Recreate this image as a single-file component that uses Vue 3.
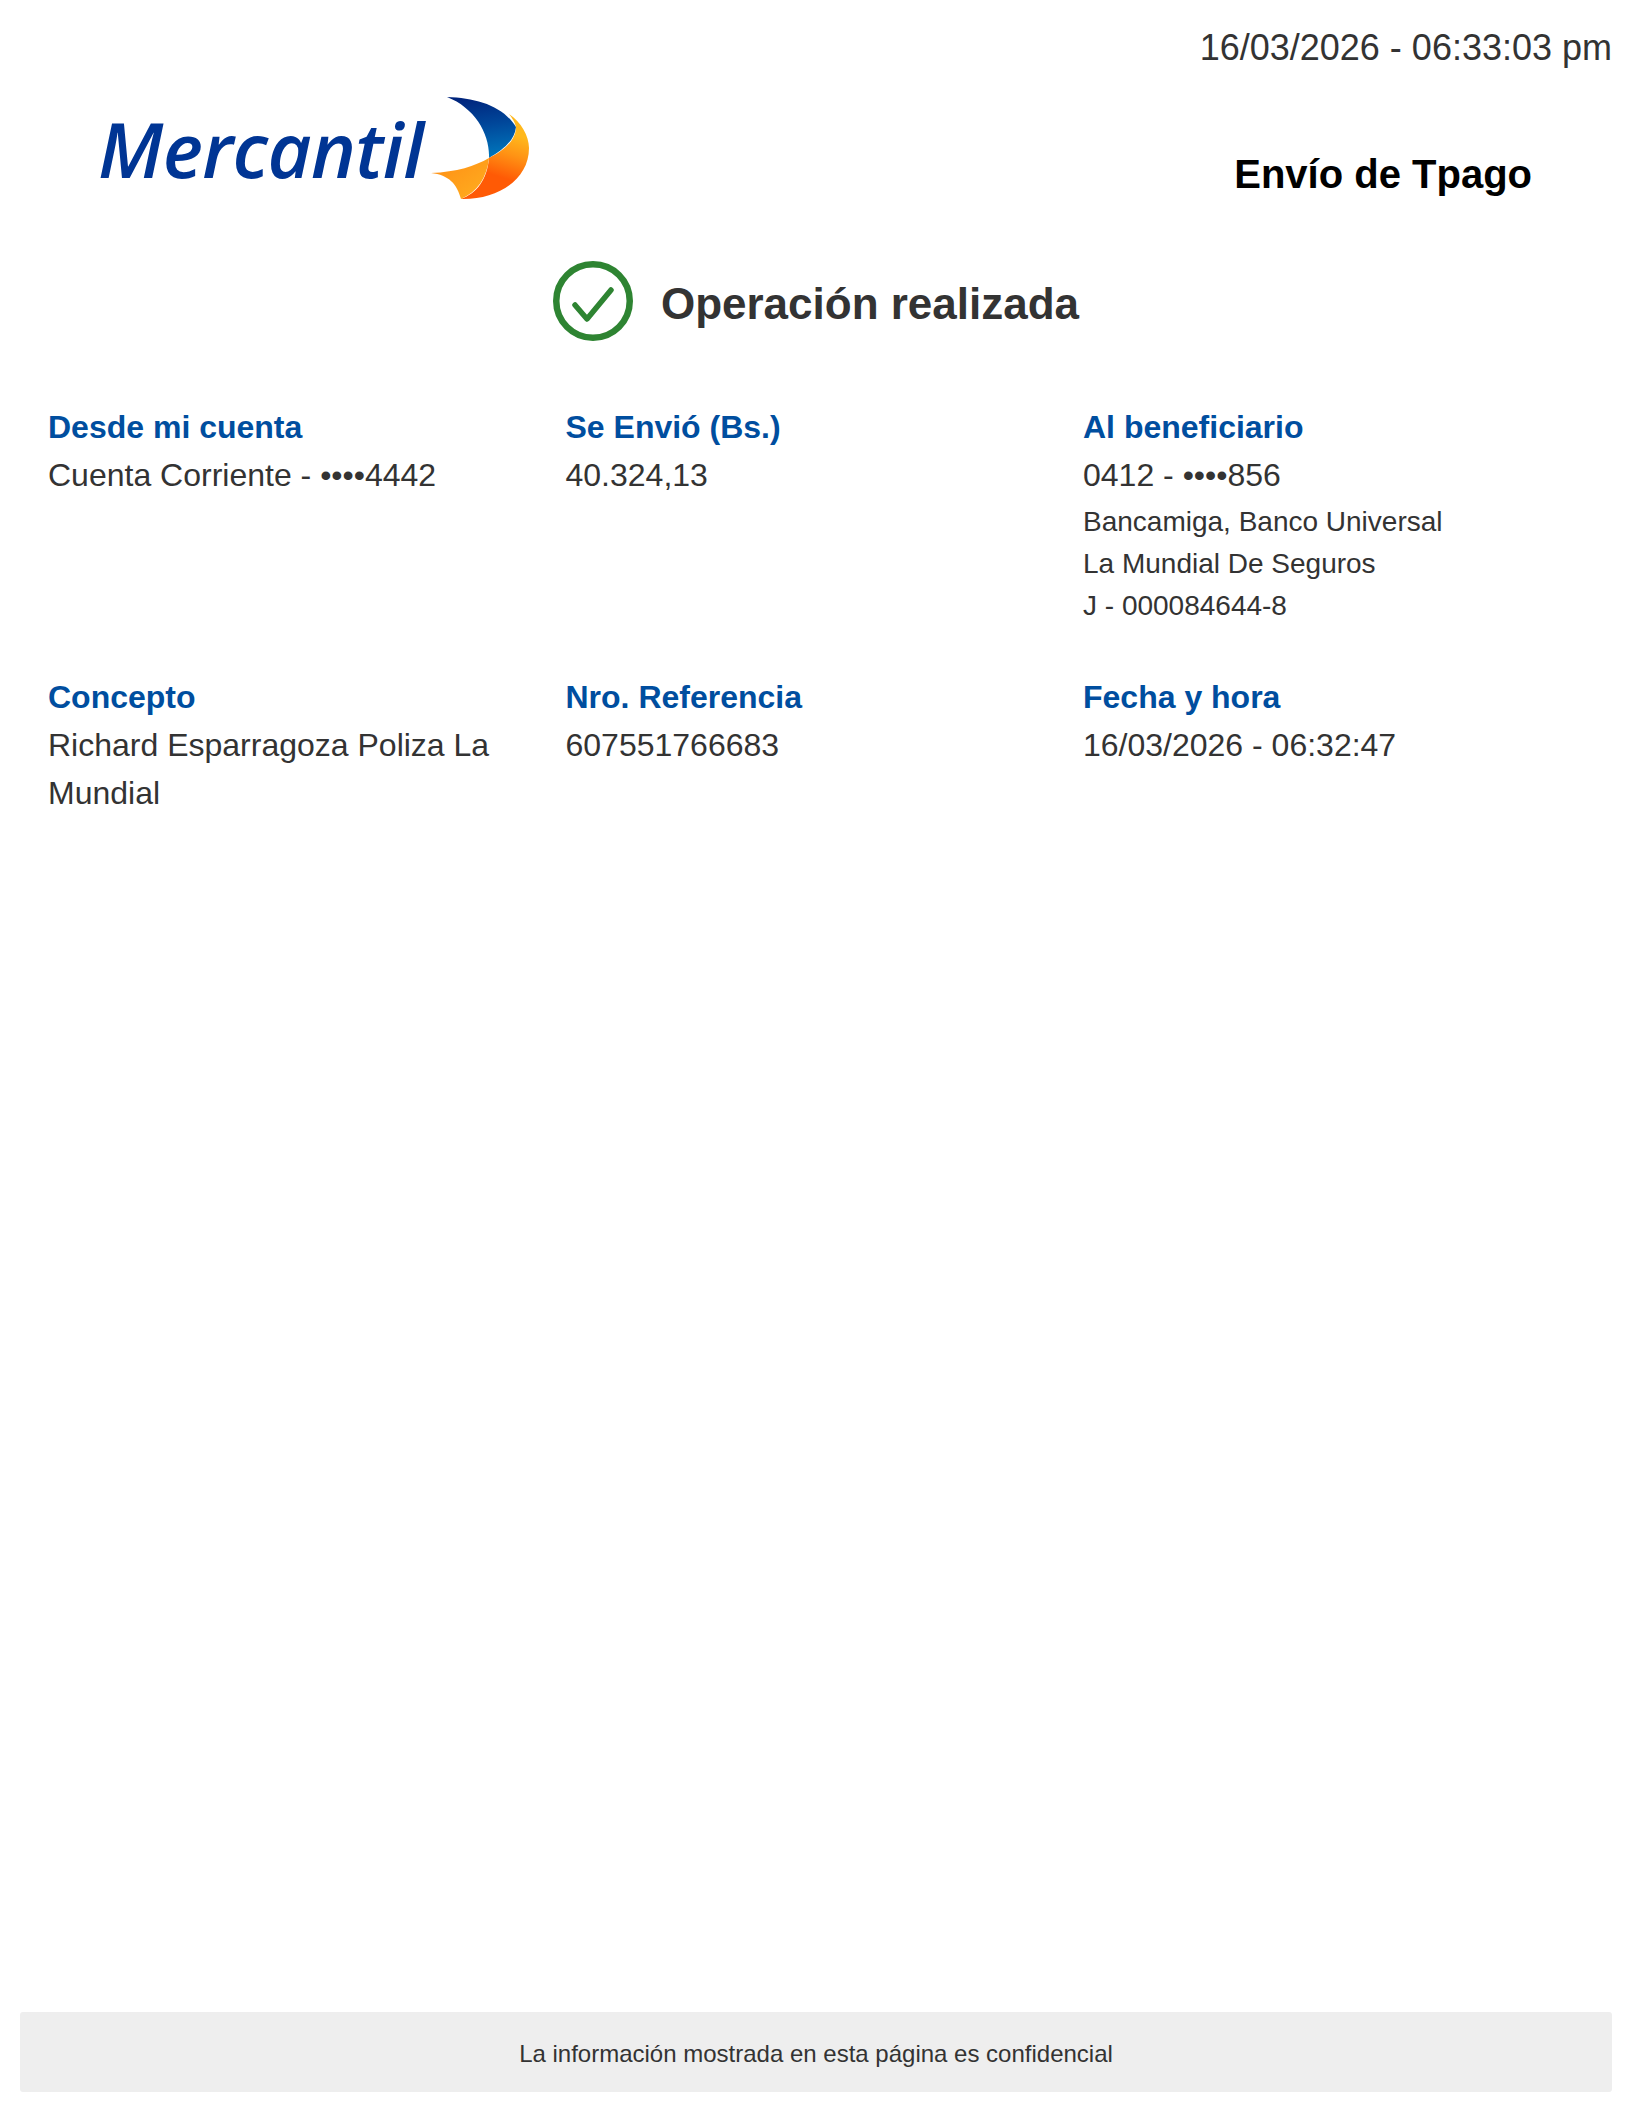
<script setup>
const cells = [
  { label: 'Desde mi cuenta', value: 'Cuenta Corriente - ••••4442', small: [] },
  { label: 'Se Envió (Bs.)', value: '40.324,13', small: [] },
  { label: 'Al beneficiario', value: '0412 - ••••856', small: ['Bancamiga, Banco Universal', 'La Mundial De Seguros', 'J - 000084644-8'] },
  { label: 'Concepto', value: 'Richard Esparragoza Poliza La Mundial', small: [] },
  { label: 'Nro. Referencia', value: '607551766683', small: [] },
  { label: 'Fecha y hora', value: '16/03/2026 - 06:32:47', small: [] }
]
</script>

<template>
  <div class="page">
    <div class="stamp">16/03/2026 - 06:33:03 pm</div>
    <header class="head">
      <div class="logo">
        <span class="brand">Mercantil</span>
        <svg class="sail" viewBox="0 0 100 106" width="100" height="106">
          <defs>
            <linearGradient id="gBlue" x1="0.5" y1="0" x2="0.65" y2="1">
              <stop offset="0" stop-color="#00257d" />
              <stop offset="0.45" stop-color="#00479a" />
              <stop offset="1" stop-color="#0078bd" />
            </linearGradient>
            <linearGradient id="gOrange" x1="0.7" y1="0.05" x2="0.5" y2="0.85">
              <stop offset="0.2" stop-color="#ffb81c" />
              <stop offset="0.5" stop-color="#ff9214" />
              <stop offset="0.85" stop-color="#ff5a05" />
            </linearGradient>
            <linearGradient id="gLight" x1="0" y1="0" x2="1" y2="1">
              <stop offset="0" stop-color="#ff8c14" />
              <stop offset="1" stop-color="#ffb020" />
            </linearGradient>
          </defs>
          <path d="M16 1 C46 2 72 10 85 31 C84 44 72 54 58 62 C59 38 44 12 16 1 Z" fill="url(#gBlue)" />
          <path d="M78 18 C90 26 98 40 98 52 C98 84 66 104 30 103 C46 97 56 84 58 62 C72 55 85 45 85 31 C84 26 81 22 78 18 Z" fill="url(#gOrange)" />
          <path d="M0 77 C26 76 44 70 58 62 C56 82 46 96 30 103 C26 88 18 79 0 77 Z" fill="url(#gLight)" />
        </svg>
      </div>
      <h1 class="title">Envío de Tpago</h1>
    </header>
    <div class="status">
      <svg class="check" viewBox="0 0 80 80" width="80" height="80">
        <circle cx="40" cy="40" r="36.75" fill="none" stroke="#2e8432" stroke-width="6.5" />
        <path d="M22 44 L34 58 L58 29" fill="none" stroke="#2e8432" stroke-width="5.5" stroke-linecap="round" stroke-linejoin="round" />
      </svg>
      <span class="status-text">Operación realizada</span>
    </div>
    <section class="grid">
      <div v-for="c in cells" :key="c.label" class="cell">
        <div class="label">{{ c.label }}</div>
        <div class="value">{{ c.value }}</div>
        <div v-if="c.small.length" class="details">
          <div v-for="s in c.small" :key="s" class="small">{{ s }}</div>
        </div>
      </div>
    </section>
    <footer class="foot">La información mostrada en esta página es confidencial</footer>
  </div>
</template>

<style>
html, body { margin: 0; background: #fff; }
</style>

<style scoped>
.page {
  box-sizing: border-box;
  height: 2112px;
  padding: 27px 20px 20px;
  display: flex;
  flex-direction: column;
  font-family: "Liberation Sans", Arial, sans-serif;
  color: #333;
}
.stamp {
  font-size: 36px;
  line-height: 42px;
  text-align: right;
}
.head {
  display: flex;
  justify-content: space-between;
  align-items: flex-start;
  height: 192px;
  padding: 0 80px 0 78px;
}
.logo {
  display: flex;
  align-items: center;
  padding-top: 27px;
}
.brand {
  font-family: "Open Sans", sans-serif;
  font-style: italic;
  font-weight: 600;
  font-size: 76px;
  letter-spacing: -0.6px;
  color: #003594;
  line-height: 1;
}
.sail { margin-left: 8px; }
.title {
  margin: 82px 0 0;
  font-size: 40px;
  line-height: 46px;
  font-weight: 700;
  color: #000;
}
.status {
  display: flex;
  justify-content: center;
  align-items: center;
  gap: 28px;
  font-size: 44px;
  font-weight: 700;
}
.status-text { padding-top: 5px; }
.grid {
  display: grid;
  grid-template-columns: repeat(3, 517.5px);
  padding-left: 28px;
  margin-top: 62px;
  row-gap: 46px;
}
.label {
  font-size: 32px;
  font-weight: 700;
  line-height: 48px;
  color: #004e9f;
}
.value {
  font-size: 32px;
  line-height: 48px;
  padding-right: 30px;
}
.details { margin-top: 2px; }
.small {
  font-size: 28px;
  line-height: 42px;
}
.foot {
  margin-top: auto;
  height: 80px;
  box-sizing: border-box;
  padding-top: 3px;
  display: flex;
  align-items: center;
  justify-content: center;
  background: #eee;
  border-radius: 3px;
  font-size: 24px;
}
</style>
